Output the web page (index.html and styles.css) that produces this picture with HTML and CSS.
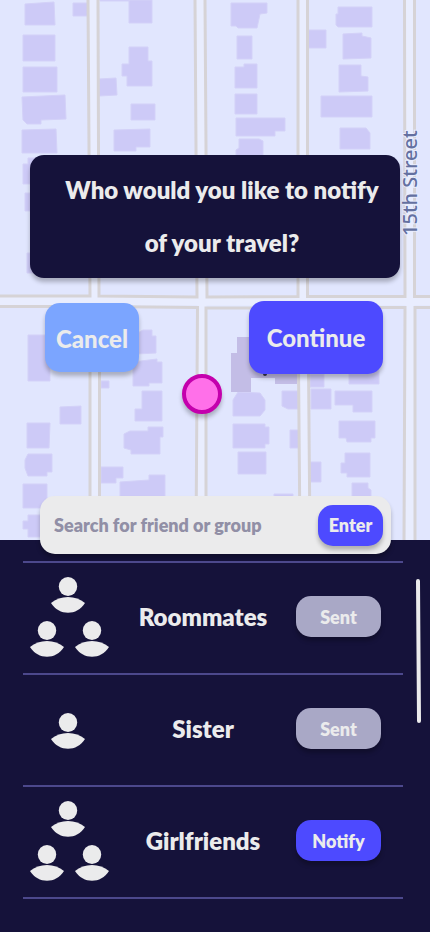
FILE: index.html
```html
<!DOCTYPE html>
<html lang="en">
<head>
<meta charset="utf-8">
<meta name="viewport" content="width=device-width, initial-scale=1">
<title>Notify friends</title>
<link rel="stylesheet" href="styles.css">
</head>
<body>
<main class="screen">
  <section class="map">
    <svg class="map-art" viewBox="0 0 430 540" preserveAspectRatio="xMidYMin slice" role="img" aria-label="Street map">
      <rect class="land" width="430" height="540"/>
      <g class="building">
        <path d="M25 4L54 2L55 25H25ZM73 3H88V16H73ZM23 35H55V61H23ZM23 67H57V92H23ZM22 97L65 95L66 119L41 120V124H27L23 120ZM22 130L56 129L57 153H22ZM100 0H129V1H100ZM129 0H152V23H129ZM129 47H148V61H152V86H127V76H122V64H129ZM99 79L116 78L117 95L99 96ZM131 104H155V120H131ZM114 130L150 129V147H136V151H114Z"/>
        <path d="M231 3H267V13L260 14L257 28H238L236 26H231ZM237 36H252V59H237ZM235 67H244V64H257V88H235ZM235 94H257V114H235ZM236 118H285V131H275V136H236ZM239 139H259L263 141V160H236V150L239 148ZM308 30H326V48H308ZM338 7H372V27H338L336 25V14H338ZM343 34L362 33V36L371 38V58L343 59ZM339 65H361V76L368 77V91L339 92ZM321 96H372V117H321ZM340 128H366L370 133V149H340Z"/>
        <path d="M28 158H40V184H23V164H28ZM25 193H40V211H25ZM27 253H40V273H27ZM28 335H50V381H28ZM60 407L81 406V424H60ZM27 423H50L49 448H27ZM28 454H52V472H47V476H28L25 468V460ZM23 484H47V508H23ZM28 515H45V537H28V529H23V521H28Z"/>
        <path d="M136 334L143 330H152V336H156V353L136 354ZM133 375V362L157 359V362H162V383H149V386H133ZM101 381H109V388H101ZM142 391H162V421H135V409H142ZM124 434L130 431H148V427H163V437H160V454H131V450L124 448ZM101 467H123V478H116V483H101ZM120 482L149 480V475H165V498H120Z"/>
        <path d="M233 400L238 392L260 393L265 400V410L260 416H233ZM282 391H298V409H288L282 406ZM310 374H324V387H310ZM311 389H331V409H311ZM335 391H372V412H353V405H335ZM349 370H379V384H349ZM339 421H375V438H371V442H347L346 438H339ZM233 424H265V427H269V444H265V448H233ZM238 452H266V474H238ZM290 430H299V448H290ZM310 462H321V482H310ZM345 453H370V477H347V473H341V463H345ZM352 483H368V488L371 490V498H352ZM274 494H293V498H274Z"/>
      </g>
      <path class="building-dark" d="M231 353H237V337H297V384H275V378H251V392H231Z"/>
      <g class="road">
        <path d="M93 0L94 302L95 540M200 0L202 302V540M302 0L303 302L304 540M409 0L410 302V540M0 301H430"/>
      </g>
      <g class="kerb">
        <path d="M88 0L90 296L0 296M98 0L99 296L197 297L195 0M205 0L207 297L298 296.500V0M307.500 0V296.500H405L404.500 0M414.500 0V296.500H430"/>
        <path d="M0 306.500H90V540M99.500 540V306.500L197.500 307.500L196 540M206 540V308H298L300 540M310 540L308 307.500H405L404 540M415 540V307.500H430"/>
      </g>
      <text class="street" transform="translate(417 236) rotate(-90)">15th Street</text>
      <circle class="speck" cx="265" cy="374" r="2"/>
    </svg>
    <h1 class="question">Who would you like to notify<br>of your travel?</h1>
    <div class="choices">
      <button class="btn cancel" type="button">Cancel</button>
      <button class="btn continue" type="button">Continue</button>
    </div>
    <span class="marker"></span>
  </section>

  <section class="sheet">
    <form class="search">
      <input class="search-input" type="text" aria-label="Search for friend or group" placeholder="Search for friend or group">
      <button class="btn enter" type="button">Enter</button>
    </form>
    <ul class="contacts">
      <li class="contact">
        <svg class="people" viewBox="0 -3 80 85" aria-hidden="true">
          <defs>
            <g id="person"><ellipse cx="17" cy="9.500" rx="9.200" ry="9.500"/><path d="M0 26C9 18 25 18 34 26C26 39 8 39 0 26Z"/></g>
          </defs>
          <use href="#person" x="21"/><use href="#person" y="44"/><use href="#person" x="45" y="44"/>
        </svg>
        <span class="name">Roommates</span>
        <button class="btn action sent" type="button">Sent</button>
      </li>
      <li class="contact">
        <svg class="people" viewBox="0 -3 80 85" aria-hidden="true"><use href="#person" x="21" y="24"/></svg>
        <span class="name">Sister</span>
        <button class="btn action sent" type="button">Sent</button>
      </li>
      <li class="contact">
        <svg class="people" viewBox="0 -3 80 85" aria-hidden="true">
          <use href="#person" x="21"/><use href="#person" y="44"/><use href="#person" x="45" y="44"/>
        </svg>
        <span class="name">Girlfriends</span>
        <button class="btn action" type="button">Notify</button>
      </li>
    </ul>
    <svg class="scroll-thumb" viewBox="0 0 6 144" aria-hidden="true"><path d="M2 2L3 142"/></svg>
  </section>
</main>
</body>
</html>
```
FILE: styles.css
```css
* {
  box-sizing: border-box;
}

body {
  margin: 0;
  background: #15123a;
  color: #ebebec;
  font-family: Lato, "Liberation Sans", sans-serif;
  font-weight: 800;
}

.screen {
  display: flex;
  flex-direction: column;
  min-height: 100vh;
}

.map {
  position: relative;
  min-height: 540px;
  padding: 155px 30px 0;
  background: #e1e6fe;
}

.map-art {
  position: absolute;
  inset: 0;
  width: 100%;
  height: 100%;
}

.land {
  fill: #e1e6fe;
}

.building {
  fill: #cdcaf7;
  stroke: #d3d1f8;
  stroke-width: 1;
}

.building-dark {
  fill: #c3bde6;
}

.road {
  fill: none;
  stroke: #e9edfe;
  stroke-width: 9;
}

.kerb {
  fill: none;
  stroke: #d6d3d6;
  stroke-width: 3;
}

.street {
  fill: #6470a0;
  stroke: #e9edfe;
  stroke-width: 2;
  paint-order: stroke;
  font: 500 20px "Noto Sans", sans-serif;
}

.speck {
  fill: #33334d;
}

.question {
  position: relative;
  margin: 0;
  padding: 8px 8px 9px 22px;
  border-radius: 14px;
  background: #15123a;
  box-shadow: 0 4px 4px rgba(0, 0, 0, 0.25);
  font-size: 24px;
  font-weight: 800;
  line-height: 53px;
  text-align: center;
}

.choices {
  position: relative;
  display: flex;
  align-items: center;
  justify-content: space-between;
  margin-top: 23px;
  padding: 0 17px 0 15px;
}

.btn {
  flex: none;
  padding: 0;
  border: 0;
  border-radius: 15px;
  background: #4d4aff;
  box-shadow: 0 4px 4px rgba(0, 0, 0, 0.25);
  color: #ebebec;
  font: 800 18px Lato, "Liberation Sans", sans-serif;
}

.cancel {
  width: 94px;
  height: 69px;
  padding-top: 2px;
  background: #7ba5ff;
  font-size: 24px;
  font-weight: 900;
}

.continue {
  width: 134px;
  height: 73px;
  font-size: 24px;
  font-weight: 900;
}

.marker {
  position: absolute;
  top: 374px;
  left: 47%;
  width: 40px;
  height: 40px;
  margin-left: -20px;
  border: 4px solid #c400ad;
  border-radius: 50%;
  background: #ff70e9;
  box-shadow: 0 4px 4px rgba(0, 0, 0, 0.25);
}

.sheet {
  position: relative;
  flex: 1;
  padding: 0 27px 32px 23px;
}

.search {
  display: flex;
  align-items: center;
  gap: 8px;
  height: 58px;
  margin: -44px 12px 7px 17px;
  padding: 0 8px 0 14px;
  border-radius: 15px;
  background: #ebebec;
  box-shadow: 0 4px 4px rgba(0, 0, 0, 0.25);
}

.search-input {
  flex: 1;
  min-width: 0;
  padding: 0;
  border: 0;
  outline: 0;
  background: transparent;
  color: #15123a;
  font: 800 18px Lato, "Liberation Sans", sans-serif;
}

.search-input::placeholder {
  color: #918fa6;
  opacity: 1;
}

.enter {
  width: 65px;
  height: 41px;
}

.contacts {
  margin: 0;
  padding: 0;
  border-top: 2px solid #4c488c;
  list-style: none;
}

.contact {
  display: flex;
  align-items: center;
  height: 112px;
  padding: 0 22px 3px 7px;
  border-bottom: 2px solid #4c488c;
}

.people {
  flex: none;
  width: 80px;
  height: 85px;
  fill: #ebebec;
}

.name {
  flex: 1;
  font-size: 24px;
  line-height: 28px;
  text-align: center;
}

.action {
  width: 85px;
  height: 41px;
}

.sent {
  background: #a9a8c6;
}

.scroll-thumb {
  position: absolute;
  top: 39px;
  right: 8px;
  width: 6px;
  height: 144px;
  fill: none;
  stroke: #ebebec;
  stroke-width: 4;
  stroke-linecap: round;
}
```
